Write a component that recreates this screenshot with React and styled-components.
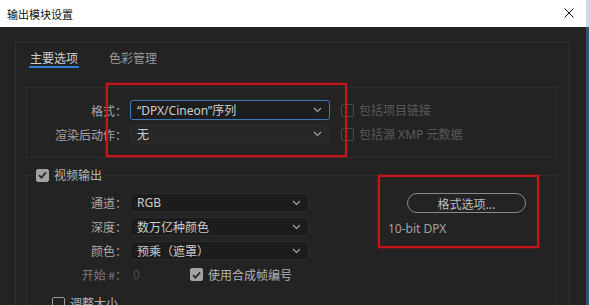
import React from "react";
import styled, { createGlobalStyle } from "styled-components";

const Global = createGlobalStyle`
  html, body { margin: 0; padding: 0; background: #232323; }
  body { font-family: "Noto Sans", "Noto Sans CJK SC", sans-serif; }
  * { box-sizing: border-box; }
`;

const Window = styled.div`
  width: 589px;
  height: 305px;
  overflow: hidden;
  display: flex;
  flex-direction: column;
  background: #232323;
`;

const TitleBar = styled.div`
  height: 27px;
  flex: none;
  background: #ffffff;
  border-right: 3px solid #c9dbe8;
  display: flex;
  align-items: center;
  justify-content: space-between;
  padding: 0 12px 0 7px;
`;

const Title = styled.div`
  font-family: "Noto Sans CJK SC", sans-serif;
  font-size: 11px;
  color: #111;
  line-height: 14px;
`;

const CloseIcon = styled.svg`
  width: 10px;
  height: 10px;
  display: block;
  margin-top: -2px;
`;

const Body = styled.div`
  flex: 1;
  min-height: 0;
  border-right: 3px solid #2f5572;
  padding: 15px 16px 0 15px;
  display: flex;
  flex-direction: column;
`;

const Panel = styled.div`
  flex: 1;
  border: 1px solid #323232;
  border-bottom: none;
  display: flex;
  flex-direction: column;
`;

const TabBar = styled.div`
  display: flex;
  gap: 29px;
  padding: 7px 0 0 13px;
`;

const Tab = styled.div`
  font-family: "Noto Sans CJK SC", sans-serif;
  font-size: 12px;
  line-height: 16px;
  color: ${(p) => (p.$active ? "#cfcfcf" : "#9a9a9a")};
  padding: 0 1px;
  border-bottom: 2px solid ${(p) => (p.$active ? "#2f7fd6" : "transparent")};
`;

const FormatGroup = styled.div`
  margin: 19px 12px 0 10px;
  border: 1px solid #2e2e2e;
  padding: 12px 0 13px 0;
  display: grid;
  grid-template-columns: 103px 200px auto;
  row-gap: 4px;
  position: relative;
`;

const Label = styled.div`
  font-family: "Noto Sans CJK SC", sans-serif;
  font-size: 12px;
  color: ${(p) => (p.$dim ? "#7a7a7a" : "#a9a9a9")};
  white-space: nowrap;
  display: flex;
  align-items: center;
  justify-content: flex-end;
  padding-right: 3px;
`;

const OptionCell = styled.div`
  padding-left: 11px;
  display: flex;
  align-items: center;
`;

const SelectBox = styled.div`
  height: ${(p) => p.$h || 20}px;
  border-radius: 3px;
  border: 1px solid ${(p) => (p.$focused ? "#3c78bf" : "#2c2c2c")};
  background: ${(p) => p.$bg || "#1c1c1c"};
  display: flex;
  align-items: center;
  justify-content: space-between;
  padding: 0 7px 0 6px;
  font-family: "Noto Sans", "Noto Sans CJK SC", sans-serif;
  font-size: 12px;
  color: #cdcdcd;
  white-space: nowrap;
`;

const Chevron = () => (
  <svg width="9" height="6" viewBox="0 0 9 6" style={{ display: "block" }}>
    <path d="M1 1 L4.5 4.5 L8 1" fill="none" stroke="#a8a8a8" strokeWidth="1.1" />
  </svg>
);

const Select = ({ children, ...rest }) => (
  <SelectBox {...rest}>
    <span>{children}</span>
    <Chevron />
  </SelectBox>
);

const CheckRow = styled.div`
  display: flex;
  align-items: center;
  gap: 5px;
  font-family: "Noto Sans", "Noto Sans CJK SC", sans-serif;
  font-size: 12px;
  color: ${(p) => (p.$disabled ? "#5a5a5a" : "#b4b4b4")};
  white-space: nowrap;
`;

const Box = styled.div`
  width: 13px;
  height: 13px;
  flex: none;
  border-radius: 2px;
  border: 1px solid ${(p) => (p.$checked ? "#a3a3a3" : p.$disabled ? "#4c4c4c" : "#9a9a9a")};
  background: ${(p) => (p.$checked ? "#a3a3a3" : "transparent")};
  display: flex;
  align-items: center;
  justify-content: center;
`;

const Checkbox = ({ checked, disabled, children }) => (
  <CheckRow $disabled={disabled}>
    <Box $checked={checked} $disabled={disabled}>
      {checked && (
        <svg width="9" height="8" viewBox="0 0 9 8">
          <path d="M1 4.2 L3.4 6.6 L8 1.4" fill="none" stroke="#2a2a2a" strokeWidth="1.8" />
        </svg>
      )}
    </Box>
    {children}
  </CheckRow>
);

const Annotation = styled.div`
  position: absolute;
  border: 2px solid #c8151b;
  box-shadow: 0 0 2px rgba(220, 20, 20, 0.7), inset 0 0 1px rgba(220, 20, 20, 0.6);
  pointer-events: none;
  top: ${(p) => p.$t}px;
  left: ${(p) => p.$l}px;
  width: ${(p) => p.$w}px;
  height: ${(p) => p.$hh}px;
`;

const VideoGroup = styled.fieldset`
  margin: 8px 12px 0 10px;
  padding: 0;
  border: 1px solid #2e2e2e;
  border-bottom: none;
  min-width: 0;
  flex: 1;
`;

const Legend = styled.legend`
  margin-left: 9px;
  padding: 0 3px 0 0;
`;

const VideoContent = styled.div`
  display: flex;
  padding-top: 9px;
`;

const VideoGrid = styled.div`
  display: grid;
  grid-template-columns: 103px 179px;
  grid-auto-rows: 19px;
  row-gap: 5px;
`;

const StartValue = styled.div`
  display: flex;
  align-items: center;
  gap: 50px;
  padding-left: 3px;
  font-family: "Noto Sans", sans-serif;
  font-size: 12px;
  color: #4e4e4e;
`;

const RightColumn = styled.div`
  position: relative;
  margin-left: 70px;
  width: 160px;
  display: flex;
  flex-direction: column;
  align-items: flex-start;
`;

const PillButton = styled.div`
  margin-left: 28px;
  width: 119px;
  height: 20px;
  border: 1px solid #8a8a8a;
  border-radius: 10px;
  display: flex;
  align-items: center;
  justify-content: center;
  font-family: "Noto Sans CJK SC", sans-serif;
  font-size: 12px;
  color: #bdbdbd;
  background: #232323;
`;

const InfoText = styled.div`
  margin: 7px 0 0 9px;
  font-family: "Noto Sans", sans-serif;
  font-size: 12px;
  color: #a2a2a2;
`;

const ResizeRow = styled.div`
  display: flex;
  align-items: center;
  margin: 10px 0 0 25px;
  gap: 6px;
`;

const ResizeLine = styled.div`
  flex: 1;
  height: 1px;
  background: #2e2e2e;
  margin-top: 8px;
`;

export default function App() {
  return (
    <>
      <Global />
      <Window>
        <TitleBar>
          <Title>输出模块设置</Title>
          <CloseIcon viewBox="0 0 10 10">
            <path d="M0.5 0.5 L9.5 9.5 M9.5 0.5 L0.5 9.5" stroke="#1a1a1a" strokeWidth="1" />
          </CloseIcon>
        </TitleBar>
        <Body>
          <Panel>
            <TabBar>
              <Tab $active>主要选项</Tab>
              <Tab>色彩管理</Tab>
            </TabBar>
            <FormatGroup>
              <Annotation $t={-5} $l={79} $w={241} $hh={74} />
              <Label>格式：</Label>
              <Select $focused $bg="#1d1d1d">“DPX/Cineon”序列</Select>
              <OptionCell>
                <Checkbox disabled>包括项目链接</Checkbox>
              </OptionCell>
              <Label>渲染后动作：</Label>
              <Select $bg="#272727">无</Select>
              <OptionCell>
                <Checkbox disabled>包括源 XMP 元数据</Checkbox>
              </OptionCell>
            </FormatGroup>
            <VideoGroup>
              <Legend>
                <Checkbox checked>视频输出</Checkbox>
              </Legend>
              <VideoContent>
                <VideoGrid>
                  <Label>通道：</Label>
                  <Select $h={19}>RGB</Select>
                  <Label>深度：</Label>
                  <Select $h={19}>数万亿种颜色</Select>
                  <Label>颜色：</Label>
                  <Select $h={19}>预乘（遮罩）</Select>
                  <Label $dim>开始 #：</Label>
                  <StartValue>
                    0
                    <Checkbox checked>使用合成帧编号</Checkbox>
                  </StartValue>
                </VideoGrid>
                <RightColumn>
                  <Annotation $t={-18} $l={-1} $w={161} $hh={73} />
                  <PillButton>格式选项...</PillButton>
                  <InfoText>10-bit DPX</InfoText>
                </RightColumn>
              </VideoContent>
              <ResizeRow>
                <Checkbox>调整大小</Checkbox>
                <ResizeLine />
              </ResizeRow>
            </VideoGroup>
          </Panel>
        </Body>
      </Window>
    </>
  );
}
